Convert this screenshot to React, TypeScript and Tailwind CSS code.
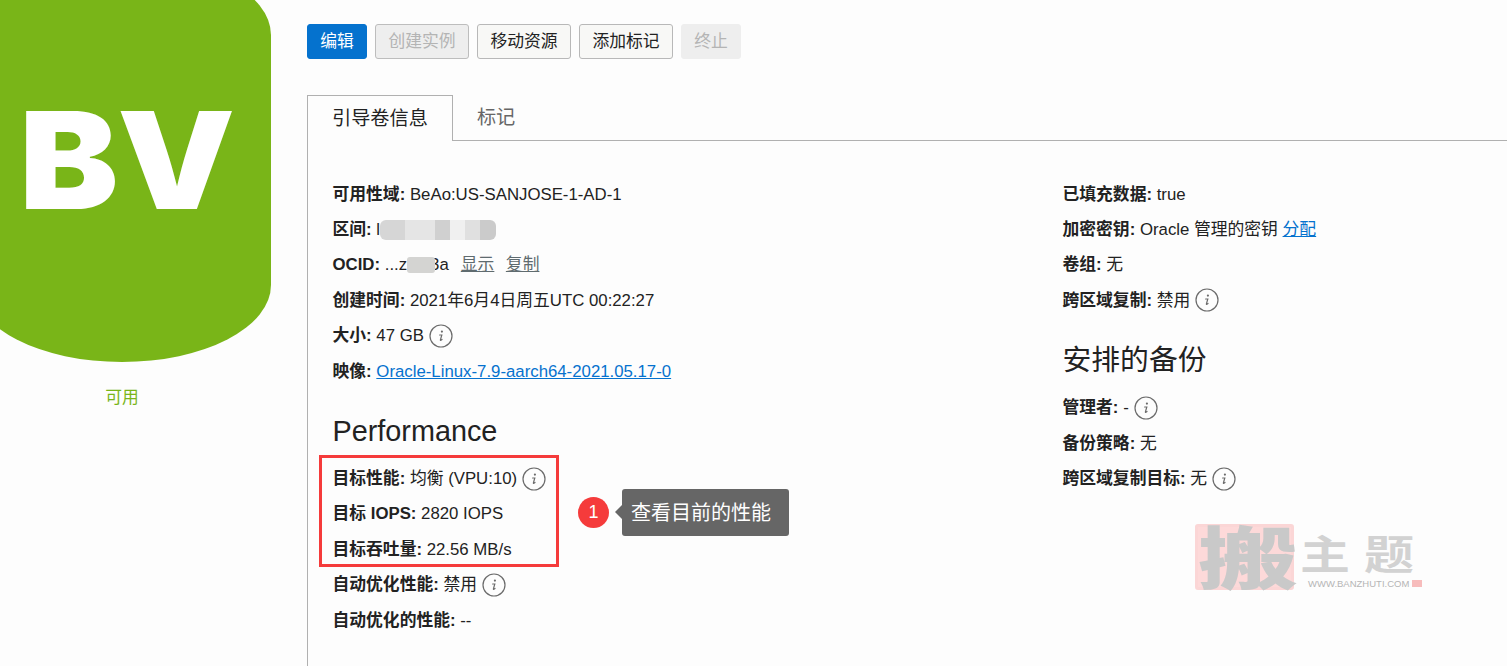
import React from "react";

const Info = () => (
  <svg width="24" height="24" viewBox="0 0 24 24" className="ml-[5px] inline-block shrink-0" fill="none">
    <circle cx="12" cy="12" r="11" stroke="#6b6b6b" strokeWidth="1.2" />
    <circle cx="12.9" cy="7.6" r="1.1" fill="#6b6b6b" />
    <path d="M10.6 11h2.2l-1.4 4.8c-.15.6.3.8.9.3l.7-.6" stroke="#6b6b6b" strokeWidth="1.2" strokeLinecap="round" />
  </svg>
);

const Row = ({ label, children }: { label: string; children?: React.ReactNode }) => (
  <div className="flex h-[35.4px] items-center whitespace-pre">
    <b className="font-bold">{label}:</b>
    <span> </span>
    {children}
  </div>
);

const Heading = ({ children }: { children: React.ReactNode }) => (
  <h2 className="mt-[24.6px] mb-[11.4px] flex h-9 items-center text-[28.8px] font-normal">{children}</h2>
);

const Btn = ({ children, kind }: { children: React.ReactNode; kind: "primary" | "disabled" | "secondary" | "flat" }) => {
  const cls = {
    primary: "w-[60px] bg-[#0572ce] border-[#0572ce] text-white",
    disabled: "w-[94px] bg-[#eeeeee] border-[#bdbdbd] text-[#b4b4b4]",
    secondary: "w-[94px] bg-[#f8f8f6] border-[#b8b8b8] text-[#222222]",
    flat: "w-[60px] bg-[#eeeeee] border-[#eeeeee] text-[#b4b4b4]",
  }[kind];
  return <button className={`h-[35px] rounded-[3px] border text-[16.8px] ${cls}`}>{children}</button>;
};

export default function App() {
  return (
    <div
      className="relative flex h-[666px] w-[1507px] overflow-hidden bg-[#fdfdfd] text-[16.8px] text-[#222222]"
      style={{ fontFamily: '"Liberation Sans", "Noto Sans CJK SC", sans-serif' }}
    >
      <aside className="w-[307px] shrink-0">
        <div className="mt-[-42px] ml-[-27px] flex h-[404px] w-[298px] items-center justify-center rounded-[149px/77px] bg-[#79b518]">
          <span
            className="mt-[1px] ml-[9px] inline-block scale-x-[1.1] text-[135px] leading-none font-black tracking-[-1px] text-white"
            style={{ fontFamily: "Inter, sans-serif" }}
          >
            BV
          </span>
        </div>
        <div className="mt-[23px] ml-[-27px] w-[298px] text-center text-[#79b518]">可用</div>
      </aside>

      <main className="min-w-0 flex-1">
        <div className="flex gap-2 pt-6">
          <Btn kind="primary">编辑</Btn>
          <Btn kind="disabled">创建实例</Btn>
          <Btn kind="secondary">移动资源</Btn>
          <Btn kind="secondary">添加标记</Btn>
          <Btn kind="flat">终止</Btn>
        </div>

        <div className="mt-9 flex h-[46px] border-b border-[#b0b0b0] text-[19.2px]">
          <div className="h-[46px] border border-b-0 border-[#b0b0b0] bg-[#fdfdfd] px-6 leading-[46px]">引导卷信息</div>
          <div className="px-6 leading-[46px] text-[#666666]">标记</div>
        </div>

        <div className="flex h-[525px] border-l border-[#b0b0b0] pt-[35.6px] pl-[24.5px]">
          <section className="w-[730px] shrink-0">
            <Row label="可用性域">BeAo:US-SANJOSE-1-AD-1</Row>
            <Row label="区间">
              <span>l</span>
              <span className="flex h-5 overflow-hidden rounded-[6px] opacity-90">
                <i className="w-[25px] bg-[#d2d2d2]" />
                <i className="w-[30px] bg-[#e3e3e3]" />
                <i className="w-[15px] bg-[#cccccc]" />
                <i className="w-[15px] bg-[#efefef]" />
                <i className="w-[15px] bg-[#dddddd]" />
                <i className="w-[16px] bg-[#c6c6c6]" />
              </span>
            </Row>
            <Row label="OCID">
              <span>...z</span>
              <span className="relative z-10 h-[16px] w-[28px] rounded-[3px] bg-[#d4d4d2]" />
              <span className="ml-[-5px]">3a</span>
              <a className="ml-[12px] text-[#5f6b6f] underline">显示</a>
              <a className="ml-[11.5px] text-[#5f6b6f] underline">复制</a>
            </Row>
            <Row label="创建时间">2021年6月4日周五UTC 00:22:27</Row>
            <Row label="大小">47 GB<Info /></Row>
            <Row label="映像">
              <a className="text-[#0572ce] underline">Oracle-Linux-7.9-aarch64-2021.05.17-0</a>
            </Row>
            <Heading>Performance</Heading>
            <Row label="目标性能">均衡 (VPU:10)<Info /></Row>
            <Row label="目标 IOPS">2820 IOPS</Row>
            <Row label="目标吞吐量">22.56 MB/s</Row>
            <Row label="自动优化性能">禁用<Info /></Row>
            <Row label="自动优化的性能">--</Row>
          </section>
          <section>
            <Row label="已填充数据">true</Row>
            <Row label="加密密钥">
              Oracle 管理的密钥 <a className="text-[#0572ce] underline">分配</a>
            </Row>
            <Row label="卷组">无</Row>
            <Row label="跨区域复制">禁用<Info /></Row>
            <Heading>安排的备份</Heading>
            <Row label="管理者">-<Info /></Row>
            <Row label="备份策略">无</Row>
            <Row label="跨区域复制目标">无<Info /></Row>
          </section>
        </div>
      </main>

      {/* annotation */}
      <div className="absolute top-[455px] left-[319px] h-[112px] w-[240px] border-[3px] border-[#f53b3b]" />
      <div className="absolute top-[497px] left-[578px] flex h-[31px] w-[31px] items-center justify-center rounded-full bg-[#f53b3b] text-[18px] text-white">1</div>
      <div className="absolute top-[489px] left-[622px] flex h-[47px] w-[167px] items-center rounded-[3px] bg-[#666666] pl-[9px] text-[20px] text-white">
        <span className="absolute top-[16px] left-[-7px] h-0 w-0 border-y-[7px] border-r-[7px] border-y-transparent border-r-[#666666]" />
        查看目前的性能
      </div>

      {/* watermark */}
      <div className="absolute top-[524px] left-[1195px] h-[66px] w-[99px] rounded-[3px] border-[3px] border-[#fbd6d6] bg-[#fdd9d9]" />
      <div className="absolute top-[510px] left-[1198px] origin-center scale-y-[0.68] text-[100px] leading-[100px] font-black text-[#c9c9c9]">搬</div>
      <div className="absolute top-[537px] left-[1300px] origin-center scale-y-[0.8] text-[50px] leading-[36px] font-bold tracking-[14px] text-[#d2d2d2]">主题</div>
      <div className="absolute top-[578px] left-[1308px] text-[9.5px] leading-3 text-[#b5b5b5]">WWW.BANZHUTI.COM</div>
      <div className="absolute top-[580px] left-[1412px] h-[7px] w-[10px] bg-[#f7bcbc]" />
    </div>
  );
}
